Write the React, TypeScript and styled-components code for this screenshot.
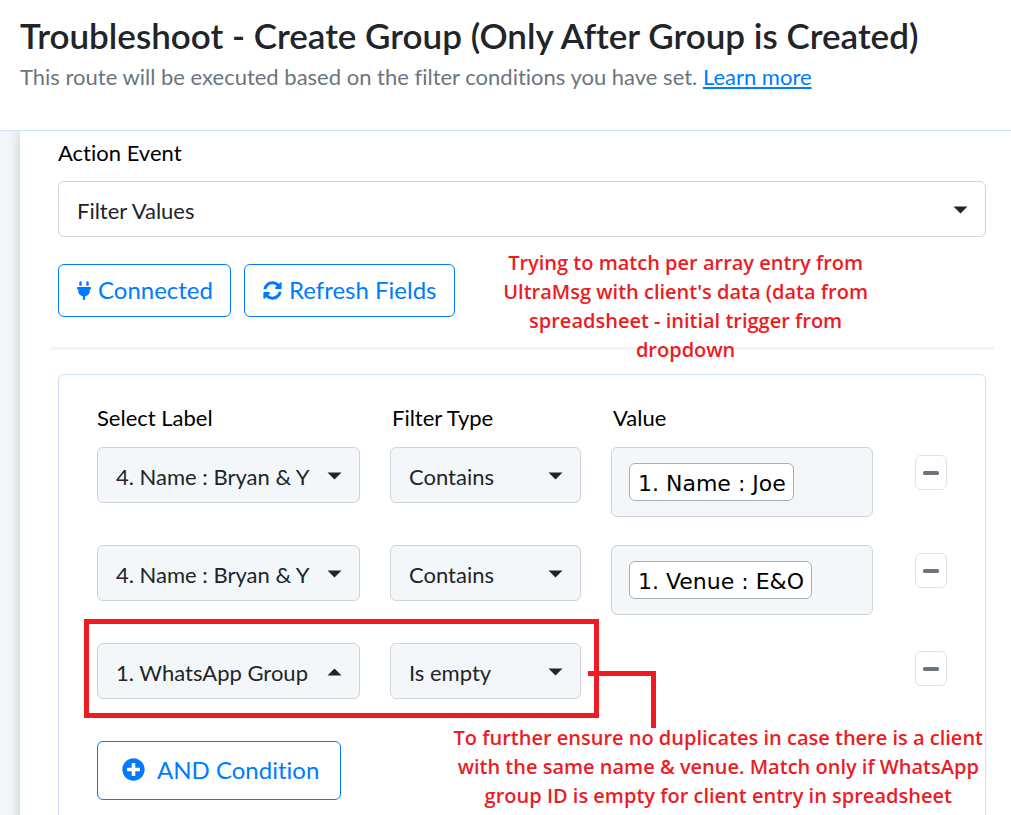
import React from "react";
import styled, { createGlobalStyle } from "styled-components";
import { FaPlusCircle } from "react-icons/fa";

const GlobalStyle = createGlobalStyle`
  *, *::before, *::after { box-sizing: border-box; }
  body {
    margin: 0;
    background: #ffffff;
    color: #212529;
    font-family: Lato, "Liberation Sans", sans-serif;
    font-size: 22px;
    line-height: 28px;
    font-variant-ligatures: none;
  }
  button, select, input { font: inherit; color: inherit; margin: 0; font-variant-ligatures: none; }
`;

const red = "#ed1c24";
const blue = "#007bff";

const Page = styled.div`
  display: flex;
  flex-direction: column;
  height: 100vh;
`;

const Header = styled.header`
  flex: none;
  padding: 14px 20px 39px;
  border-bottom: 1px solid #d0dffb;
`;

const Title = styled.h1`
  margin: 0 0 7px;
  font-size: 35px;
  line-height: 42px;
  font-weight: 600;
`;

const Subtitle = styled.p`
  margin: 0;
  color: #6c757d;
`;

const Link = styled.a`
  color: ${blue};
  text-decoration: underline;
  text-decoration-thickness: 2px;
  text-underline-offset: 2px;
`;

const Scroller = styled.main`
  flex: 1;
  min-height: 0;
  overflow-y: auto;
  scrollbar-width: none;
  padding-left: 20px;
  background: #f3f7fa;
`;

const Panel = styled.div`
  position: relative;
  min-height: 100%;
  padding: 8px 25px 38px 38px;
  background: #ffffff;
  box-shadow: 0 0 12px rgba(60, 80, 100, 0.28);
`;

const Label = styled.label`
  display: block;
  color: #000000;
`;

const SelectFrame = styled.div`
  position: relative;
  height: 56px;
`;

const Select = styled.select<{ $filled?: boolean }>`
  appearance: none;
  display: block;
  width: 100%;
  height: 100%;
  padding: 4px 44px 0 18px;
  border: 1px solid #ced4da;
  border-radius: 6px;
  background: ${(p) => (p.$filled ? "#f3f7fa" : "#ffffff")};
`;

const Caret = styled.svg<{ $up?: boolean }>`
  position: absolute;
  right: 18px;
  top: 25px;
  width: 15px;
  height: 8px;
  fill: #212529;
  pointer-events: none;
  transform: ${(p) => (p.$up ? "scaleY(-1)" : "none")};
`;

const EventField = styled.div`
  display: grid;
  gap: 14px;
`;

const ButtonBar = styled.div`
  display: flex;
  gap: 13px;
  margin-top: 27px;
`;

const OutlineButton = styled.button<{ $large?: boolean }>`
  display: inline-flex;
  align-items: center;
  justify-content: center;
  gap: ${(p) => (p.$large ? 12 : 7)}px;
  height: ${(p) => (p.$large ? 59 : 53)}px;
  padding: ${(p) => (p.$large ? "0 21px 2px 24px" : "0 17px 2px 18px")};
  border: 1px solid ${blue};
  border-radius: 6px;
  background: #ffffff;
  color: ${blue};
  font-size: 24px;
  white-space: nowrap;
`;

const Divider = styled.hr`
  height: 3px;
  margin: 30px -8px 24px -7px;
  border: 0;
  background: #eef5fd;
`;

const Card = styled.section`
  padding: 29px 38px 38px;
  border: 1px solid #d0dffb;
  border-radius: 6px;
`;

const Row = styled.div`
  position: relative;
  display: grid;
  grid-template-columns: 263fr 191fr 262fr 44px;
  column-gap: 30px;
  align-items: start;
  margin-bottom: 28px;
`;

const HeadRow = styled(Row)`
  margin-bottom: 15px;
  color: #000000;
`;

const Head = styled.span<{ $inset?: boolean }>`
  padding-left: ${(p) => (p.$inset ? 2 : 0)}px;
`;

const ValueBox = styled.div`
  height: 70px;
  padding: 15px 17px;
  border: 1px solid #ced4da;
  border-radius: 6px;
  background: #f3f7fa;
`;

const Token = styled.span`
  display: block;
  width: fit-content;
  height: 38px;
  padding: 0 7px 0 8px;
  border: 1px solid #adadad;
  border-radius: 6px;
  background: #ffffff;
  color: #000000;
  font-family: "DejaVu Sans", sans-serif;
  line-height: 39px;
  white-space: nowrap;
`;

const RemoveButton = styled.button`
  grid-column: 4;
  justify-self: end;
  display: flex;
  align-items: center;
  justify-content: center;
  width: 32px;
  height: 35px;
  margin-top: 8px;
  padding: 0;
  border: 1px solid #dee2e6;
  border-radius: 6px;
  background: #ffffff;
`;

const Highlight = styled.div`
  position: absolute;
  grid-column: 1 / 3;
  inset: -24px -18px -19px -13px;
  border: 5px solid ${red};
  pointer-events: none;
`;

const Connector = styled.svg`
  position: absolute;
  grid-column: 3;
  left: -23px;
  top: 27px;
  width: 70px;
  height: 60px;
  fill: none;
  stroke: ${red};
  stroke-width: 5;
  pointer-events: none;
`;

const LastRow = styled(Row)`
  margin-bottom: 42px;
`;

const Note = styled.p`
  position: absolute;
  z-index: 1;
  margin: 0;
  color: ${red};
  font-family: "Open Sans", "Noto Sans", sans-serif;
  font-size: 20px;
  line-height: 29px;
  font-weight: 600;
  text-align: center;
  white-space: nowrap;
`;

const TopNote = styled(Note)`
  top: 117px;
  right: 143px;
`;

const BottomNote = styled(Note)`
  top: 592px;
  right: 28px;
`;

type DropdownProps = {
  id?: string;
  value: string;
  name?: string;
  filled?: boolean;
  up?: boolean;
};

const Dropdown = ({ id, value, name, filled, up }: DropdownProps) => (
  <SelectFrame>
    <Select id={id} aria-label={name} $filled={filled} defaultValue={value}>
      <option>{value}</option>
    </Select>
    <Caret viewBox="0 0 15 8" $up={up} aria-hidden="true">
      <path d="M.5 .5H14.5L7.5 7.5Z" />
    </Caret>
  </SelectFrame>
);

const Remove = () => (
  <RemoveButton type="button" aria-label="Remove condition">
    <svg width="16" height="4" viewBox="0 0 16 4" aria-hidden="true">
      <rect width="16" height="4" rx="1.5" fill="#6c757d" />
    </svg>
  </RemoveButton>
);

const PlugIcon = () => (
  <svg width="14" height="21" viewBox="0 -56 384 568" fill="currentColor" aria-hidden="true">
    <path d="M320 32a32 32 0 0 0-64 0v96h64zm48 128H16A16 16 0 0 0 0 176v32a16 16 0 0 0 16 16h16v32a160.070 160.070 0 0 0 128 156.800V512h64v-99.200A160.070 160.070 0 0 0 352 256v-32h16a16 16 0 0 0 16-16v-32a16 16 0 0 0-16-16zM128 32a32 32 0 0 0-64 0v96h64z" />
  </svg>
);

const RefreshIcon = () => (
  <svg width="19" height="21" viewBox="0 -56 512 568" fill="currentColor" aria-hidden="true">
    <path d="M370.72 133.28C339.458 104.008 298.888 87.962 255.848 88c-77.458.068-144.328 53.178-162.791 126.85-1.344 5.363-6.122 9.15-11.651 9.15H24.103c-7.498 0-13.194-6.807-11.807-14.176C33.933 94.924 134.813 8 256 8c66.448 0 126.791 26.136 171.315 68.685L463.03 40.97C478.149 25.851 504 36.559 504 57.941V192c0 13.255-10.745 24-24 24H345.941c-21.382 0-32.09-25.851-16.971-40.971l41.75-41.749zM32 296h134.059c21.382 0 32.09 25.851 16.971 40.971l-41.75 41.75c31.262 29.273 71.835 45.319 114.876 45.28 77.418-.07 144.315-53.144 162.787-126.849 1.344-5.363 6.122-9.15 11.651-9.15h57.304c7.498 0 13.194 6.807 11.807 14.176C478.067 417.076 377.187 504 256 504c-66.448 0-126.791-26.136-171.315-68.685L48.97 471.03C33.851 486.149 8 475.441 8 454.059V320c0-13.255 10.745-24 24-24z" />
  </svg>
);

const conditions = [
  { label: "4. Name : Bryan & Y", type: "Contains", value: "1. Name : Joe" },
  { label: "4. Name : Bryan & Y", type: "Contains", value: "1. Venue : E&O" },
];

export default function App() {
  return (
    <>
      <GlobalStyle />
      <Page>
        <Header>
          <Title>Troubleshoot - Create Group (Only After Group is Created)</Title>
          <Subtitle>
            This route will be executed based on the filter conditions you have set.{" "}
            <Link href="#learn-more">Learn more</Link>
          </Subtitle>
        </Header>
        <Scroller>
          <Panel>
            <EventField>
              <Label htmlFor="action-event">Action Event</Label>
              <Dropdown id="action-event" value="Filter Values" />
            </EventField>
            <ButtonBar>
              <OutlineButton type="button">
                <PlugIcon />
                Connected
              </OutlineButton>
              <OutlineButton type="button">
                <RefreshIcon />
                Refresh Fields
              </OutlineButton>
            </ButtonBar>
            <TopNote>
              Trying to match per array entry from
              <br />
              UltraMsg with client's data (data from
              <br />
              spreadsheet - initial trigger from
              <br />
              dropdown
            </TopNote>
            <Divider />
            <Card>
              <HeadRow>
                <Head>Select Label</Head>
                <Head $inset>Filter Type</Head>
                <Head $inset>Value</Head>
              </HeadRow>
              {conditions.map((c) => (
                <Row key={c.value}>
                  <Dropdown filled name="Select Label" value={c.label} />
                  <Dropdown filled name="Filter Type" value={c.type} />
                  <ValueBox>
                    <Token>{c.value}</Token>
                  </ValueBox>
                  <Remove />
                </Row>
              ))}
              <LastRow>
                <Dropdown filled up name="Select Label" value="1. WhatsApp Group" />
                <Dropdown filled name="Filter Type" value="Is empty" />
                <Remove />
                <Highlight />
                <Connector viewBox="0 0 70 60" aria-hidden="true">
                  <path d="M0 3.500H65.500V58" />
                </Connector>
              </LastRow>
              <OutlineButton type="button" $large>
                <FaPlusCircle size={23} />
                AND Condition
              </OutlineButton>
            </Card>
            <BottomNote>
              To further ensure no duplicates in case there is a client
              <br />
              with the same name &amp; venue. Match only if WhatsApp
              <br />
              group ID is empty for client entry in spreadsheet
            </BottomNote>
          </Panel>
        </Scroller>
      </Page>
    </>
  );
}
